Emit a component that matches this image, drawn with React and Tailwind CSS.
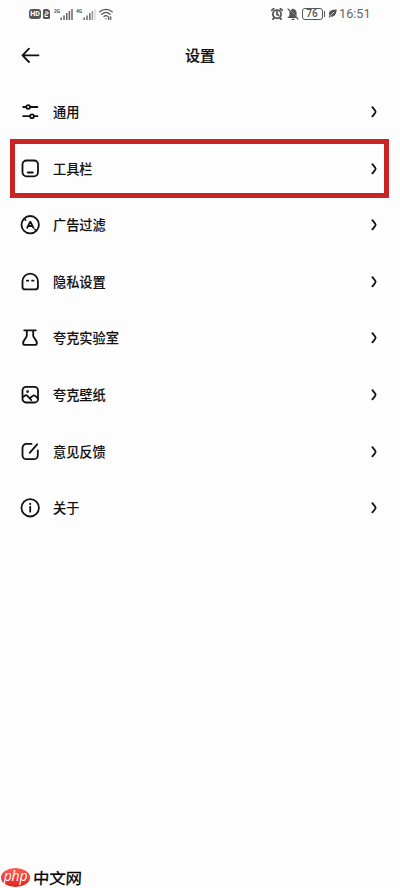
import React from "react";

const Icon = ({ children }) => (
  <svg viewBox="0 0 20 20" className="size-5 shrink-0" fill="none" stroke="#111" strokeWidth="1.8" strokeLinecap="round" strokeLinejoin="round">
    {children}
  </svg>
);

const icons = {
  sliders: (
    <Icon>
      <path d="M3.200 5H6M10.400 5h7M3.200 14.200h6.200M14.200 14.200h3.200" />
      <circle cx="8.200" cy="5" r="1.900" />
      <circle cx="12" cy="14.200" r="1.900" />
    </Icon>
  ),
  toolbar: (
    <Icon>
      <rect x="2.500" y="1.500" width="15.500" height="15.800" rx="4" />
      <path d="M7.800 13.500h5" />
    </Icon>
  ),
  filter: (
    <Icon>
      <circle cx="10.200" cy="9.700" r="8.700" />
      <path d="m4.500 4 1.200 1.200M14.800 14.300l1 1" strokeWidth="1.600" />
      <path d="m7.100 12.800 3-6h.4l3 6M8.500 11h3.600" />
    </Icon>
  ),
  ghost: (
    <Icon>
      <path d="M2.500 9.300a7.700 7.700 0 0 1 15.400 0v5.800a2.400 2.400 0 0 1-2.400 2.300H4.900a2.400 2.400 0 0 1-2.400-2.300z" />
      <path d="M6.900 8.700h1.400M12.100 8.700h1.400" />
    </Icon>
  ),
  flask: (
    <Icon>
      <path d="M4.200 2.300h11.600M6.800 2.500v5.300c0 1.800-3.700 4.400-3.700 7.100 0 1.300.8 2 2 2h9.800c1.200 0 2-.7 2-2 0-2.700-3.700-5.300-3.700-7.100V2.500" />
    </Icon>
  ),
  image: (
    <Icon>
      <rect x="2.500" y="1.900" width="15.500" height="15.600" rx="3.500" />
      <circle cx="7.600" cy="6.600" r=".5" fill="#111" />
      <path d="m3 12 2.100-1.500c.8-.5 1.700-.4 2.300.3l3.800 4.200M9.800 13.200l2.900-2.300c.7-.6 1.700-.6 2.400 0l2.500 2.100" />
    </Icon>
  ),
  edit: (
    <Icon>
      <path d="M11.500 1.900H6.500a4 4 0 0 0-4 4v7.300a4 4 0 0 0 4 4h7.300a4 4 0 0 0 4-4V8.500M9.700 10.800l7.400-8.500" />
    </Icon>
  ),
  info: (
    <Icon>
      <circle cx="10.200" cy="9.800" r="8.700" />
      <path d="M10.200 8.700v5" />
      <circle cx="10.200" cy="5.900" r=".45" fill="#111" strokeWidth="1.200" />
    </Icon>
  ),
};

const rows = [
  ["sliders", "通用"],
  ["toolbar", "工具栏"],
  ["filter", "广告过滤"],
  ["ghost", "隐私设置"],
  ["flask", "夸克实验室"],
  ["image", "夸克壁纸"],
  ["edit", "意见反馈"],
  ["info", "关于"],
];

const Bars = ({ faded }) => (
  <svg viewBox="0 0 13 11" className="h-[11px] w-[13px]" stroke="#666" strokeWidth="1.500">
    <path d="M1.200 11V8.500M4 11V6.500M6.800 11V4" />
    <path d="M9.400 11V2" stroke={faded ? "#999" : "#666"} />
    <path d="M12 11V0" stroke={faded ? "#ddd" : "#666"} />
  </svg>
);

function StatusBar() {
  return (
    <div className="flex h-7 items-center justify-between pl-[29px] pr-[30px] font-['Roboto','Liberation_Sans',sans-serif] text-[#555]">
      <div className="flex items-center">
        <span className="flex h-[10px] w-3 items-center justify-center rounded-[3px] bg-[#555] text-[7px] font-bold leading-none text-white">HD</span>
        <svg viewBox="0 0 7 10" className="ml-[2px] h-[10px] w-[7px]">
          <path d="M0 1.500A1.500 1.500 0 0 1 1.500 0H5l2 2v6.500A1.500 1.500 0 0 1 5.500 10h-4A1.500 1.500 0 0 1 0 8.500z" fill="#555" />
          <path d="M2 3h3v2H2v2.500h3" stroke="#fff" fill="none" />
        </svg>
        <span className="ml-1 w-[6px] self-start text-[5px] font-bold leading-[6px]">2G</span>
        <Bars />
        <span className="ml-[3px] w-[7px] self-start text-[5px] font-bold leading-[6px]">4G</span>
        <Bars faded />
        <svg viewBox="0 0 14 12" className="ml-[3px] h-3 w-[14px]" fill="none" stroke="#555" strokeWidth="1.300" strokeLinecap="round">
          <path d="M.8 3.800c3.500-3.200 8.900-3.200 12.400 0M2.900 6.200c2.400-2.100 5.800-2.100 8.200 0M5 8.500c1.200-1 2.600-1 3.600-.2" />
          <path d="M7 10.700v.1M9.700 9v2.300M11.700 9v2.300" />
        </svg>
      </div>
      <div className="flex items-center">
        <svg viewBox="0 0 12 12" className="size-3" fill="none" stroke="#555" strokeWidth="1.800" strokeLinecap="round">
          <circle cx="6" cy="6.300" r="4.100" />
          <path d="m.9 2.300 1.800-1.500M11.100 2.300 9.300.8M6 4v2.500l1.500.8M3 10l-1 1.200M9 10l1 1.200" />
        </svg>
        <svg viewBox="0 0 12 12" className="ml-1 size-3" fill="none" stroke="#555" strokeWidth="1.200" strokeLinecap="round">
          <path d="M4.600 2a3 3 0 0 1 4.400 2.600v2.600L4.500 2.500zM3 4.800V8L1.700 9.300H9L3 4z" fill="#555" />
          <path d="M1 1l10 10M5 11.300h2M6 1v.5" />
        </svg>
        <div className="ml-[3px] flex h-[12px] w-[21px] items-center justify-center rounded-[3px] border border-[#555] text-[10px] font-medium leading-[10px]">76</div>
        <div className="ml-px h-[6px] w-[1.500px] bg-[#555]" />
        <svg viewBox="0 0 9 9" className="ml-[3px] size-[9px]">
          <path d="M8.700.5C4 .7 1 1.500 1 4.500c0 1 .2 1.700.6 2.200L.5 8.300l.7.5L2.500 7.500C6.500 8.500 8.500 5 8.700.5z" fill="#555" />
          <path d="M2.500 6.500 6 3" stroke="#fff" strokeWidth=".7" />
        </svg>
        <span className="ml-[2px] w-[31px] whitespace-nowrap text-[12.700px] leading-none text-[#666]">16:51</span>
      </div>
    </div>
  );
}

export default function App() {
  return (
    <div className="flex h-[888px] w-[400px] flex-col overflow-hidden bg-[#fdfdfd] font-['Noto_Sans_CJK_SC',sans-serif] text-[#111]">
      <StatusBar />
      <header className="grid h-[55.700px] shrink-0 grid-cols-[1fr_auto_1fr] items-center px-5">
        <svg viewBox="0 0 20 20" className="size-5" fill="none" stroke="#111" strokeWidth="1.800" strokeLinecap="round" strokeLinejoin="round">
          <path d="M18.500 9.300H2.500M9 2.600 2.500 9.300l6.500 6.700" />
        </svg>
        <h1 className="pb-[2px] text-[15px] font-medium leading-none [-webkit-text-stroke:0.200px_#111]">设置</h1>
      </header>
      <main className="flex flex-col">
        {rows.map(([icon, label], i) => (
          <div key={label} className="relative flex h-[56.600px] shrink-0 items-center pl-5 pr-[23px]">
            {icons[icon]}
            <span className="ml-[13px] flex-1 text-[13.200px] font-medium leading-5 [-webkit-text-stroke:0.100px_#111]">{label}</span>
            <svg viewBox="0 0 6 12" className="h-3 w-[6px]" fill="none" stroke="#111" strokeWidth="1.800" strokeLinecap="round" strokeLinejoin="round">
              <path d="M1.400 1.200C2.700 2.700 4.600 4.700 4.600 5.700S2.700 8.900 1.400 10.400" />
            </svg>
            {i === 1 && <div className="pointer-events-none absolute -bottom-px -top-px left-[10px] right-[11px] border-[5px] border-[#cb2424]" />}
          </div>
        ))}
      </main>
      <footer className="mt-auto flex h-[21px] items-center pl-px">
        <span className="flex h-[19px] w-[29px] items-center justify-center rounded-[50%] bg-gradient-to-b from-[#ff5a50] to-[#e02020] pb-[3px] font-['Open_Sans',sans-serif] text-[14px] italic leading-none tracking-[-0.300px] text-white">php</span>
        <span className="ml-[3px] origin-left scale-y-95 -skew-x-3 text-[16.300px] leading-none text-black [-webkit-text-stroke:0.300px_#000]">中文网</span>
      </footer>
    </div>
  );
}
